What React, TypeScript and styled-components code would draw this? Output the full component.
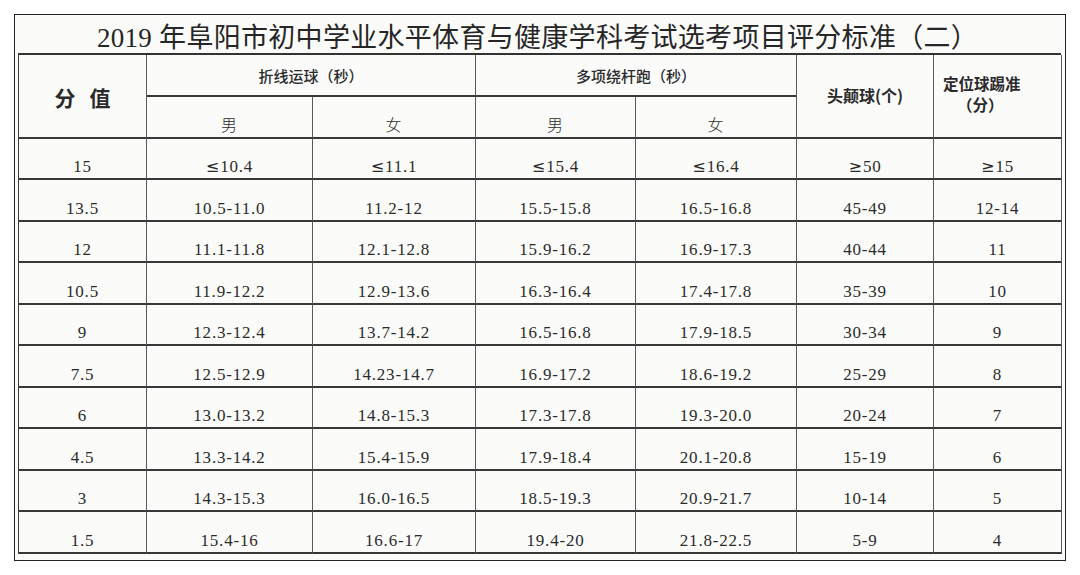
import styled, { createGlobalStyle } from 'styled-components';

const GlobalStyle = createGlobalStyle`
  html, body {
    margin: 0;
    padding: 0;
    background: #ffffff;
  }
`;

const Frame = styled.div`
  box-sizing: border-box;
  margin: 14px 0 0 14px;
  width: 1052px;
  height: 547px;
  border: 1px solid #222;
  background: #fbfbfa;
  padding: 0 4px 0 3px;
  display: flex;
  flex-direction: column;
`;

const Title = styled.h1`
  margin: 0;
  height: 38px;
  display: flex;
  align-items: center;
  justify-content: center;
  font-family: "Liberation Serif", "Noto Sans CJK SC", serif;
  font-size: 27px;
  font-weight: 400;
  letter-spacing: 0.3px;
  color: #262626;
  padding-right: 4px;
  padding-top: 2px;
  box-sizing: border-box;
`;

const Grid = styled.div`
  display: grid;
  grid-template-columns: 128px 166px 163px 160px 161px 137px 128px;
  grid-template-rows: 42px 41.5px repeat(10, 41.55px);
  border-top: 2px solid #333;
  border-left: 1.5px solid #3a3a3a;
  box-sizing: border-box;
  width: 1043px;
`;

const Cell = styled.div<{ $col?: string; $row?: string }>`
  box-sizing: border-box;
  grid-column: ${(p) => p.$col || 'auto'};
  grid-row: ${(p) => p.$row || 'auto'};
  border-right: 1px solid #5a5a5a;
  border-bottom: 2px solid #383838;
  display: flex;
  justify-content: center;
  align-items: flex-end;
  padding-bottom: 3px;
  font-family: "Liberation Serif", "Noto Sans CJK SC", serif;
  font-size: 17px;
  letter-spacing: 0.8px;
  color: #2b2b2b;
  line-height: 17px;
`;

const Sym = styled.span`
  font-family: "DejaVu Sans", sans-serif;
  font-size: 16px;
  letter-spacing: 0;
  margin-right: 1px;
`;

const HeadCell = styled(Cell)<{ $size?: number; $weight?: number }>`
  align-items: center;
  padding-bottom: 0;
  letter-spacing: 0;
  font-family: "Noto Sans CJK SC", sans-serif;
  font-size: ${(p) => p.$size || 15}px;
  font-weight: ${(p) => p.$weight || 500};
  color: #2a2a2a;
`;

const SubHead = styled(Cell)`
  font-family: "Noto Sans CJK SC", sans-serif;
  font-weight: 300;
  font-size: 16px;
  padding-bottom: 4px;
`;

const ScoreHead = styled(HeadCell)`
  font-size: 21px;
  font-weight: 700;
  word-spacing: 0.45em;
  padding-top: 4px;
`;

const StackHead = styled(HeadCell)`
  flex-direction: column;
  align-items: flex-start;
  justify-content: center;
  padding-left: 9px;
  padding-bottom: 4px;
  line-height: 21px;
  font-weight: 700;
  font-size: 15.5px;
`;

const Indented = styled.span`
  padding-left: 14px;
`;

const rows: string[][] = [
  ['15', '≤10.4', '≤11.1', '≤15.4', '≤16.4', '≥50', '≥15'],
  ['13.5', '10.5-11.0', '11.2-12', '15.5-15.8', '16.5-16.8', '45-49', '12-14'],
  ['12', '11.1-11.8', '12.1-12.8', '15.9-16.2', '16.9-17.3', '40-44', '11'],
  ['10.5', '11.9-12.2', '12.9-13.6', '16.3-16.4', '17.4-17.8', '35-39', '10'],
  ['9', '12.3-12.4', '13.7-14.2', '16.5-16.8', '17.9-18.5', '30-34', '9'],
  ['7.5', '12.5-12.9', '14.23-14.7', '16.9-17.2', '18.6-19.2', '25-29', '8'],
  ['6', '13.0-13.2', '14.8-15.3', '17.3-17.8', '19.3-20.0', '20-24', '7'],
  ['4.5', '13.3-14.2', '15.4-15.9', '17.9-18.4', '20.1-20.8', '15-19', '6'],
  ['3', '14.3-15.3', '16.0-16.5', '18.5-19.3', '20.9-21.7', '10-14', '5'],
  ['1.5', '15.4-16', '16.6-17', '19.4-20', '21.8-22.5', '5-9', '4'],
];

// split a leading ≤ / ≥ so it can use a font with a wider glyph
const renderValue = (v: string) => {
  if (v.startsWith('≤') || v.startsWith('≥')) {
    return (
      <>
        <Sym>{v[0]}</Sym>
        {v.slice(1)}
      </>
    );
  }
  return v;
};

export default function App() {
  return (
    <>
      <GlobalStyle />
      <Frame>
        <Title>2019 年阜阳市初中学业水平体育与健康学科考试选考项目评分标准（二）</Title>
        <Grid>
          <ScoreHead $col="1" $row="1 / span 2">分 值</ScoreHead>
          <HeadCell $col="2 / span 2" $row="1">折线运球（秒）</HeadCell>
          <HeadCell $col="4 / span 2" $row="1">多项绕杆跑（秒）</HeadCell>
          <HeadCell $col="6" $row="1 / span 2" $size={16} $weight={600}>
            头颠球(个)
          </HeadCell>
          <StackHead $col="7" $row="1 / span 2">
            <span>定位球踢准</span>
            <Indented>（分）</Indented>
          </StackHead>
          <SubHead $col="2" $row="2">男</SubHead>
          <SubHead $col="3" $row="2">女</SubHead>
          <SubHead $col="4" $row="2">男</SubHead>
          <SubHead $col="5" $row="2">女</SubHead>
          {rows.map((r) =>
            r.map((v, i) => <Cell key={r[0] + '-' + i}>{renderValue(v)}</Cell>)
          )}
        </Grid>
      </Frame>
    </>
  );
}
